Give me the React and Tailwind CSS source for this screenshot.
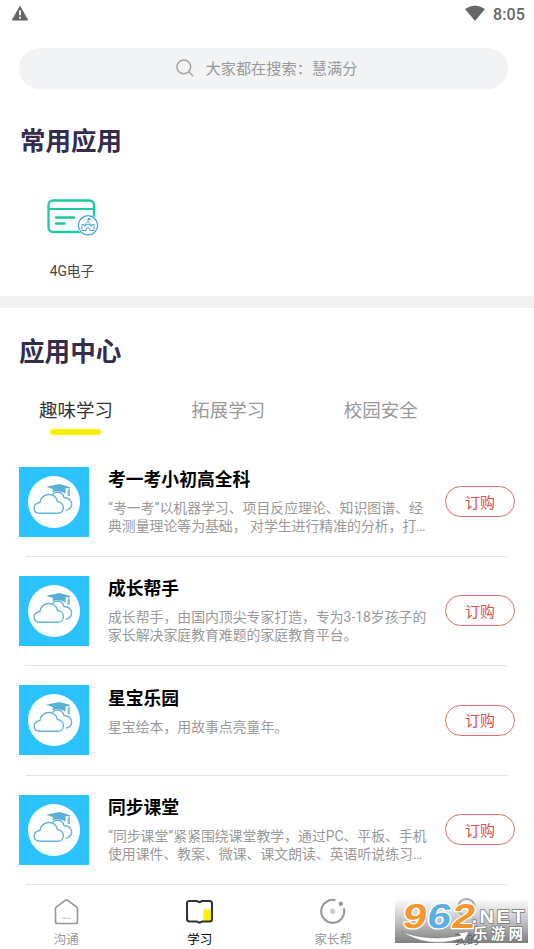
import React from "react";

const apps = [
  {
    title: "考一考小初高全科",
    lines: ["“考一考”以机器学习、项目反应理论、知识图谱、经", "典测量理论等为基础， 对学生进行精准的分析，打…"],
  },
  {
    title: "成长帮手",
    lines: ["成长帮手，由国内顶尖专家打造，专为3-18岁孩子的", "家长解决家庭教育难题的家庭教育平台。"],
  },
  { title: "星宝乐园", lines: ["星宝绘本，用故事点亮童年。"] },
  {
    title: "同步课堂",
    lines: ["“同步课堂”紧紧围绕课堂教学，通过PC、平板、手机", "使用课件、教案、微课、课文朗读、英语听说练习…"],
  },
];

function StatusBar() {
  return (
    <header className="flex h-[28px] items-center justify-between pl-[11px] pr-[9px]">
      <svg width="18" height="16" viewBox="0 0 18 16" className="mt-[-2px]">
        <path d="M9 .4 17.4 15.4H.6z" fill="#666" />
        <path d="M9 5.2v5M9 11.8v2" stroke="#fff" strokeWidth="1.8" />
      </svg>
      <div className="flex items-center gap-[8px]">
        <svg width="20" height="16" viewBox="0 0 20 16" className="mt-[-3px]">
          <path d="M0 4Q10-3 20 4L10 16z" fill="#666" />
        </svg>
        <span className="pt-[1px] text-[16px] font-medium leading-[28px] tracking-[0.1px] text-[#666]">8:05</span>
      </div>
    </header>
  );
}

function CardIcon() {
  return (
    <svg width="54" height="40" viewBox="0 0 54 40" fill="none">
      <rect x="2.5" y="2.5" width="45.5" height="31.5" rx="4.5" stroke="#1dc9a4" strokeWidth="2.3" />
      <path d="M3 11h45" stroke="#1dc9a4" strokeWidth="2.2" />
      <path d="M10 19.5h18M10 25.5h8.5" stroke="#1dc9a4" strokeWidth="2.4" strokeLinecap="round" />
      <circle cx="42" cy="27.3" r="10.6" fill="#fff" />
      <circle cx="42" cy="27.3" r="9.6" fill="#fff" stroke="#3d9be0" strokeWidth="1.2" />
      <path
        d="M36 32.500v-6h2v1.500h1.700v-2L42 23.700l2.300 2.300v2H46v-1.500h2v6h-4.200v-2q-1.800-2-3.600 0v2zM42 23.500v-3h2v1.200H42M40.300 26.500h3.400"
        stroke="#3d9be0"
        strokeWidth=".9"
      />
    </svg>
  );
}

function CloudIcon() {
  return (
    <svg width="70" height="70" viewBox="0 0 70 70" fill="none" className="shrink-0 bg-[#2bc3ff]">
      <circle cx="35" cy="35" r="26" fill="#fff" />
      <path d="M33.500 27.500c3-4 10-3 11.500 3 9 .5 10.500 10.500 2 12.800" stroke="#62b5d9" strokeWidth="1.300" />
      <path
        d="M20.500 46.200c-7.500-.5-7-9.700 .5-10.700 .5-5 4.500-8 9-8s7.500 3 8.500 7c7.500 .5 8 11.200 .5 11.700z"
        fill="#fff"
        stroke="#62b5d9"
        strokeWidth="1.400"
      />
      <path d="M27 19.800 40.500 17l11.500 3.300-5.500 1.200v5.500c-3-3-9-3.500-13-1.500l.5-3.500z" fill="#5aafd5" />
      <path d="M50 20.500v4" stroke="#5aafd5" strokeWidth="1" />
      <path d="M48.500 23.500h2.500v5.500h-2.500z" fill="#5aafd5" opacity=".75" />
    </svg>
  );
}

function AppRow({ title, lines }) {
  return (
    <li className="h-[109.400px]">
      <div className="flex h-[108.400px] pl-[19px] pr-[19px] pt-[19px]">
        <CloudIcon />
        <div className="ml-[19px] w-[337px] shrink-0 whitespace-nowrap">
          <h3 className="pt-[0.300px] text-[17.800px] font-bold leading-[26px] text-black">{title}</h3>
          <div className="mt-[5.900px] text-[13.860px] leading-[18px] text-[#999]">
            {lines.map((line) => (
              <p key={line}>{line}</p>
            ))}
          </div>
        </div>
        <button className="mt-[19.500px] h-[31px] w-[70px] shrink-0 rounded-full border border-[#e56a6a] pt-[1.500px] text-[15px] leading-[28px] text-[#df4b4b]">
          订购
        </button>
      </div>
      <div className="ml-[26px] mr-[26px] h-px bg-[#e4e4e4]" />
    </li>
  );
}

function WatermarkLogo() {
  return (
    <svg width="134" height="44" viewBox="0 0 134 44" className="absolute left-[394px] top-[15px] overflow-visible">
      <g
        fontFamily="Liberation Sans, sans-serif"
        fontWeight="bold"
        fontSize="34.500"
        strokeWidth="2.400"
        stroke="#fff"
        paintOrder="stroke"
        strokeLinejoin="round"
      >
        <text transform="translate(7.500 27.500) skewX(-9) scale(1.24 1)" fill="#f6962b">9</text>
        <text transform="translate(32 27.500) skewX(-9) scale(1.24 1)" fill="#5ab0e6">6</text>
        <text transform="translate(56.500 27.500) skewX(-9) scale(1.22 1)" fill="#f6962b">2</text>
      </g>
      <path d="M7 31.500Q34 42 67 35.500L64 33 75 31.500 70 41.500 68 38.500Q34 49 7 31.500z" fill="#fff" stroke="#777" strokeWidth=".6" />
      <g fill="#fff" stroke="#777" strokeWidth="1.400" paintOrder="stroke" fontWeight="bold">
        <text transform="translate(77.500 22.500) scale(1.080 1)" fontFamily="Liberation Sans, sans-serif" fontSize="18.500" letterSpacing="2.300">.NET</text>
        <text x="79" y="39" fontFamily="Noto Sans CJK SC, sans-serif" fontSize="14.500" letterSpacing="3.200">乐游网</text>
      </g>
    </svg>
  );
}

const navIcons = {
  沟通: (
    <>
      <path d="M2.500 10.800Q2.500 9.700 3.500 8.900L12.500 2.200Q13.500 1.500 14.500 2.200L23.500 8.900Q24.500 9.700 24.500 10.800V23.500Q24.500 25.500 22.500 25.500H4.500Q2.500 25.500 2.500 23.500z" stroke="#999" strokeWidth="1.700" />
      <path d="M9.500 20.300h8" stroke="#ccc" strokeWidth="1.300" />
    </>
  ),
  学习: (
    <>
      <path d="M17.500 11.500h8V23h-8z" fill="#fff000" />
      <path d="M11 3H3.500Q1 3 1 5.500V21Q1 23.500 3.500 23.500H11q2.500 2.200 5 0h7.500q2.500 0 2.500-2.500V5.500Q26 3 23.500 3H16q-2.500 2.200-5 0z" stroke="#333" strokeWidth="2.100" />
    </>
  ),
  家长帮: (
    <>
      <path d="M15.500 2.200A11.500 11.500 0 1 0 23.800 10.300" stroke="#999" strokeWidth="2.100" />
      <circle cx="12.700" cy="13.300" r="2.700" fill="#ccc" />
      <circle cx="20.800" cy="5.700" r="2.200" fill="#999" />
    </>
  ),
  我的: (
    <>
      <circle cx="13.500" cy="9.500" r="8.500" stroke="#aaa" strokeWidth="2" />
      <path d="M3 25.500q1-8 10.500-8T24 25.500z" stroke="#bbb" strokeWidth="1.200" />
    </>
  ),
};

const labelTone = {
  沟通: "text-[#999]",
  学习: "text-black",
  家长帮: "text-[#999]",
  我的: "text-[#5f5f5f]",
};

export default function App() {
  return (
    <div className="flex h-[949px] w-[534px] flex-col overflow-hidden bg-white font-[Roboto,'Noto_Sans_CJK_SC',sans-serif]">
      <StatusBar />
      <div className="ml-[19px] mt-[20px] flex h-[41px] w-[489px] shrink-0 items-center rounded-full bg-[#f2f3f5] pl-[157px] text-[15.200px] text-[#999]">
        <svg width="18" height="18" viewBox="0 0 18 18" fill="none" stroke="#a3a3a3" strokeWidth="1.500" className="mt-[-2px]">
          <circle cx="7.800" cy="7.800" r="6.900" />
          <path d="m12.800 12.800 4.400 4.400" />
        </svg>
        <span className="ml-[11.500px] whitespace-nowrap pt-[2px]">大家都在搜索：慧满分</span>
      </div>

      <section className="h-[207px] shrink-0">
        <h2 className="ml-[20px] pt-[33px] text-[25.500px] font-bold leading-[38px] text-[#332d4b]">常用应用</h2>
        <div className="ml-[19px] mt-[38px] flex w-[106px] flex-col items-center">
          <div className="pl-[1px]"><CardIcon /></div>
          <span className="mt-[23px] text-[13.800px] leading-[20px] text-[#444]">4G电子</span>
        </div>
      </section>
      <div className="h-[12px] shrink-0 bg-[#f1f1f1]" />

      <section className="h-[577px] shrink-0 overflow-hidden">
        <h2 className="ml-[19px] pt-[25px] text-[25.600px] font-bold leading-[38px] text-[#332d4b]">应用中心</h2>
        <div className="ml-[39px] mt-[26px] flex gap-[78.300px] whitespace-nowrap text-[18.500px] leading-[28px] text-[#999]">
          <div className="flex flex-col items-center">
            <span className="text-[#333]">趣味学习</span>
            <span className="mr-[1px] mt-[4px] h-[6px] w-[51px] rounded-full bg-[#fff000]" />
          </div>
          <span>拓展学习</span>
          <span>校园安全</span>
        </div>
        <ul className="mt-[12.600px]">
          {apps.map((app) => (
            <AppRow key={app.title} {...app} />
          ))}
        </ul>
      </section>

      <nav className="relative grid h-[64px] shrink-0 grid-cols-4">
        <div className="absolute left-[395px] top-[15px] h-[43px] w-[133px] bg-linear-to-b from-[#fbfbfb] via-[#c2c2c2] to-[#808080]" />
        {Object.entries(navIcons).map(([label, icon]) => (
          <div key={label} className="relative flex flex-col items-center pt-[13px]">
            <svg width="28" height="28" viewBox="0 0 28 28" fill="none">{icon}</svg>
            <span className={`mr-[1px] mt-[3.500px] text-[12.500px] leading-[20px] ${labelTone[label]}`}>{label}</span>
          </div>
        ))}
        <WatermarkLogo />
      </nav>
    </div>
  );
}
